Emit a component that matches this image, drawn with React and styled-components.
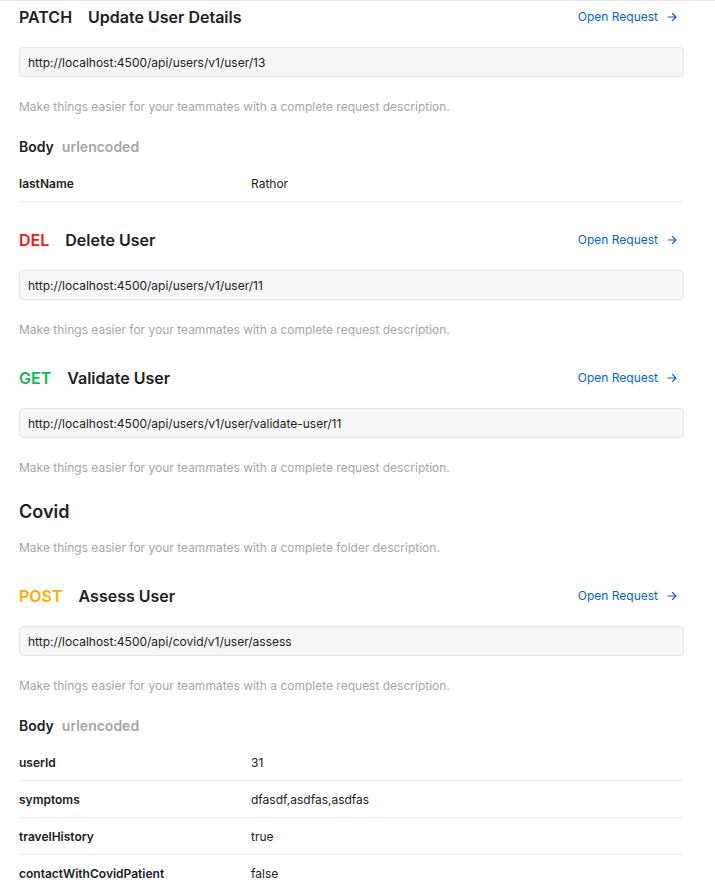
import React from 'react';
import styled, { createGlobalStyle } from 'styled-components';

const GlobalStyle = createGlobalStyle`
  html, body {
    margin: 0;
    padding: 0;
    background: #ffffff;
  }
  body {
    font-family: Inter, "Noto Sans", sans-serif;
    color: #212121;
    -webkit-font-smoothing: antialiased;
  }
`;

const methodColors = {
  PATCH: '#212121',
  DEL: '#eb2013',
  GET: '#0cbb52',
  POST: '#ffad00',
};

const Page = styled.div`
  border-top: 1px solid #e6e6e6;
  padding: 4px 31px 0 19px;
  display: flex;
  flex-direction: column;
  gap: 27px;
`;

const Section = styled.section`
  display: flex;
  flex-direction: column;
`;

const HeadingRow = styled.div`
  display: flex;
  align-items: center;
  justify-content: space-between;
  height: 24px;
`;

const Title = styled.h2`
  margin: 0;
  display: flex;
  gap: 16px;
  font-size: 16px;
  line-height: 24px;
  font-weight: 600;
  color: #212121;
`;

const Method = styled.span`
  color: ${({ $method }) => methodColors[$method] || '#212121'};
`;

const OpenLink = styled.a`
  display: flex;
  align-items: center;
  gap: 9px;
  padding-right: 7px;
  font-size: 12px;
  line-height: 18px;
  color: #0265d2;
  text-decoration: none;
  cursor: pointer;
`;

const UrlBox = styled.div`
  margin-top: 18px;
  height: 30px;
  box-sizing: border-box;
  display: flex;
  align-items: center;
  padding: 0 8px;
  background: #f6f6f6;
  border: 1px solid #e6e6e6;
  border-radius: 4px;
  font-size: 12px;
  color: #212121;
`;

const Desc = styled.p`
  margin: ${({ $top }) => $top ?? 21}px 0 0;
  font-size: 12px;
  line-height: 18px;
  color: #a6a6a6;
`;

const BodyHeader = styled.div`
  margin-top: 21px;
  display: flex;
  gap: 8px;
  font-size: 14px;
  line-height: 20px;
  font-weight: 600;
`;

const Muted = styled.span`
  color: #a6a6a6;
`;

const Table = styled.div`
  margin-top: 8px;
  margin-bottom: -1px;
  display: flex;
  flex-direction: column;
`;

const Row = styled.div`
  display: grid;
  grid-template-columns: 232px 1fr;
  align-items: center;
  height: 37px;
  box-sizing: border-box;
  border-bottom: ${({ $last }) => ($last ? 'none' : '1px solid #ededed')};
  margin-right: 1px;
  font-size: 12px;
`;

const Key = styled.span`
  font-weight: 600;
  color: #212121;
`;

const Value = styled.span`
  color: #212121;
`;

const FolderTitle = styled.h1`
  margin: -4px 0 0;
  font-size: 18px;
  line-height: 24px;
  font-weight: 600;
  color: #212121;
`;

const Arrow = () => (
  <svg width="10" height="10" viewBox="0 0 10 10" fill="none" stroke="currentColor" strokeWidth="1.1" strokeLinecap="round" strokeLinejoin="round">
    <path d="M1 5h8M5.5 1.5L9 5 5.5 8.5" />
  </svg>
);

const desc = 'Make things easier for your teammates with a complete request description.';

const Request = ({ method, name, url, body }) => (
  <Section>
    <HeadingRow>
      <Title>
        <Method $method={method}>{method}</Method>
        <span>{name}</span>
      </Title>
      <OpenLink>
        Open Request <Arrow />
      </OpenLink>
    </HeadingRow>
    <UrlBox>{url}</UrlBox>
    <Desc>{desc}</Desc>
    {body && (
      <>
        <BodyHeader>
          <span>Body</span>
          <Muted>urlencoded</Muted>
        </BodyHeader>
        <Table>
          {body.map(([k, v], i) => (
            <Row key={k} $last={body.length > 1 && i === body.length - 1}>
              <Key>{k}</Key>
              <Value>{v}</Value>
            </Row>
          ))}
        </Table>
      </>
    )}
  </Section>
);

export default function App() {
  return (
    <>
      <GlobalStyle />
      <Page>
        <Request
          method="PATCH"
          name="Update User Details"
          url="http://localhost:4500/api/users/v1/user/13"
          body={[['lastName', 'Rathor']]}
        />
        <Request method="DEL" name="Delete User" url="http://localhost:4500/api/users/v1/user/11" />
        <Request method="GET" name="Validate User" url="http://localhost:4500/api/users/v1/user/validate-user/11" />
        <Section>
          <FolderTitle>Covid</FolderTitle>
          <Desc $top={15}>Make things easier for your teammates with a complete folder description.</Desc>
        </Section>
        <Request
          method="POST"
          name="Assess User"
          url="http://localhost:4500/api/covid/v1/user/assess"
          body={[
            ['userId', '31'],
            ['symptoms', 'dfasdf,asdfas,asdfas'],
            ['travelHistory', 'true'],
            ['contactWithCovidPatient', 'false'],
          ]}
        />
      </Page>
    </>
  );
}
